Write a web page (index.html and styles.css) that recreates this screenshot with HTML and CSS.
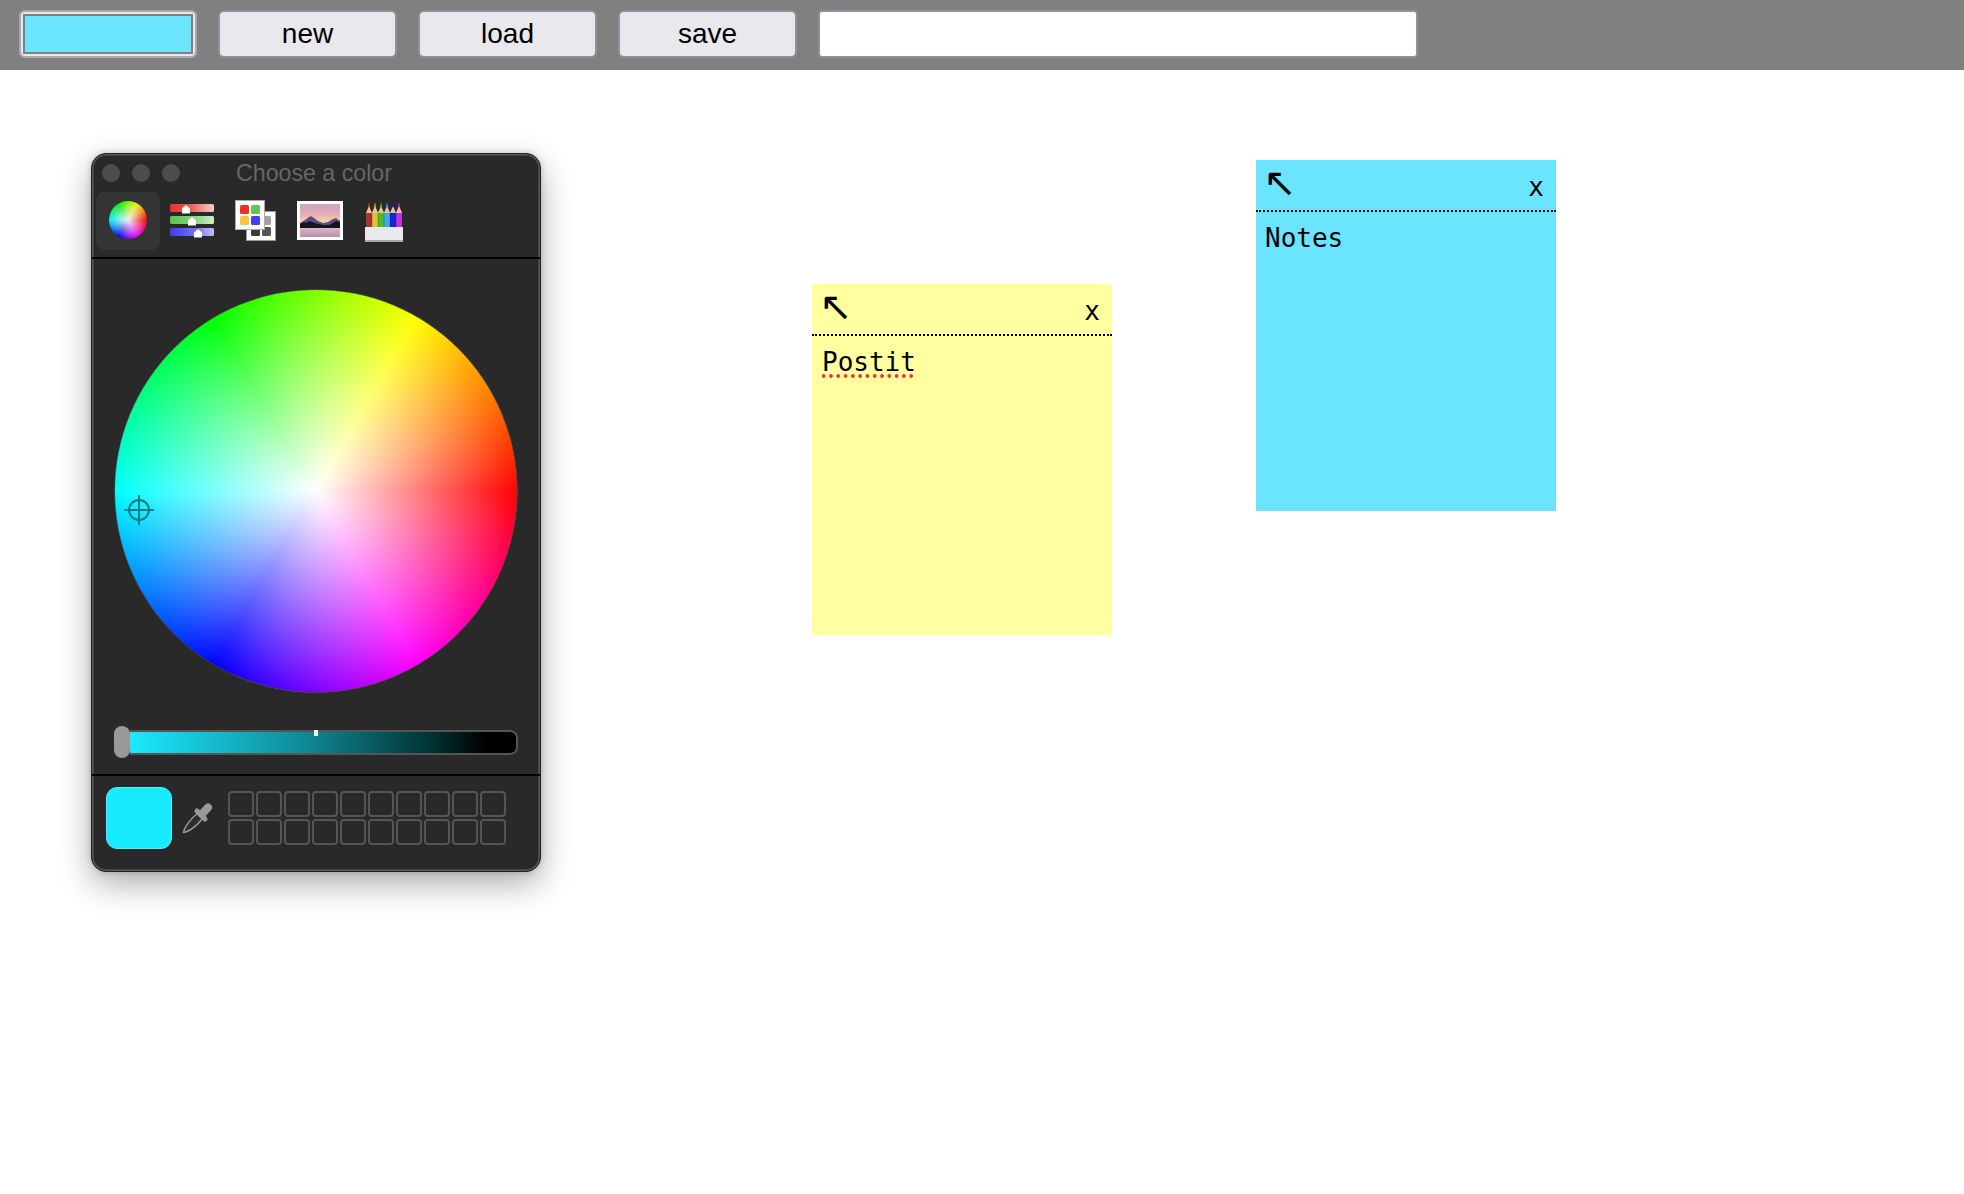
FILE: index.html
```html
<!DOCTYPE html>
<html lang="en">
<head>
<meta charset="utf-8">
<title>Notes</title>
<link rel="stylesheet" href="styles.css">
</head>
<body>
<header class="bar">
  <input class="color" type="color" value="#6ce5ff" aria-label="color">
  <button class="btn">new</button>
  <button class="btn">load</button>
  <button class="btn">save</button>
  <input class="name" type="text" aria-label="name">
</header>
<main class="desk">
  <section class="picker">
    <div class="titlebar">
      <div class="lights"><i></i><i></i><i></i></div>
      <div class="title">Choose a color</div>
    </div>
    <div class="tools">
      <div class="tab"><div class="wheel-small"></div></div>
      <svg class="ic-sliders" viewBox="0 0 44 42" width="44" height="42">
        <defs>
          <linearGradient id="gr"><stop offset="0" stop-color="#e8332a"/><stop offset=".4" stop-color="#e8524a"/><stop offset="1" stop-color="#f5cbc8"/></linearGradient>
          <linearGradient id="gg"><stop offset="0" stop-color="#5fc254"/><stop offset=".5" stop-color="#7fd074"/><stop offset="1" stop-color="#cdeec8"/></linearGradient>
          <linearGradient id="gb"><stop offset="0" stop-color="#3a3fee"/><stop offset=".6" stop-color="#7276f2"/><stop offset="1" stop-color="#bfc1f8"/></linearGradient>
        </defs>
        <rect x="0" y="4" width="44" height="8" rx="1.500" fill="url(#gr)"/>
        <rect x="0" y="16" width="44" height="8" rx="1.500" fill="url(#gg)"/>
        <rect x="0" y="28" width="44" height="8" rx="1.500" fill="url(#gb)"/>
        <path d="M16 5l4 3.500v5h-8v-5z" fill="#fff"/>
        <path d="M22 17l4 3.500v5h-8v-5z" fill="#fff"/>
        <path d="M28 29l4 3.500v5h-8v-5z" fill="#fff"/>
      </svg>
      <svg class="ic-palette" viewBox="0 0 41 42" width="41" height="42">
        <rect x="11.500" y="11.500" width="29" height="29" fill="#fff" stroke="#999"/>
        <rect x="27" y="16" width="9" height="9" rx="1.500" fill="#a0a0a0"/>
        <rect x="16" y="27" width="9" height="9" rx="1.500" fill="#3c3c3c"/>
        <rect x="27" y="27" width="9" height="9" rx="1.500" fill="#555"/>
        <rect x=".5" y=".5" width="29" height="29" fill="#fff" stroke="#aaa"/>
        <rect x="5" y="5" width="9" height="9" rx="1.500" fill="#ee3124"/>
        <rect x="16" y="5" width="9" height="9" rx="1.500" fill="#62c554"/>
        <rect x="5" y="16" width="9" height="9" rx="1.500" fill="#f9c33c"/>
        <rect x="16" y="16" width="9" height="9" rx="1.500" fill="#3f41f5"/>
      </svg>
      <svg class="ic-image" viewBox="0 0 46 40" width="46" height="40">
        <defs>
          <linearGradient id="sky" x1="0" y1="0" x2="0" y2="1"><stop offset="0" stop-color="#c9a2c8"/><stop offset=".45" stop-color="#e6adb0"/><stop offset=".8" stop-color="#fadb9f"/><stop offset="1" stop-color="#f9e0a8"/></linearGradient>
          <linearGradient id="lake" x1="0" y1="0" x2="0" y2="1"><stop offset="0" stop-color="#e0bccb"/><stop offset="1" stop-color="#bb8cab"/></linearGradient>
        </defs>
        <rect y="1" width="46" height="39" fill="#fff"/>
        <rect x="3" y="4" width="40" height="23" fill="url(#sky)"/>
        <rect x="3" y="27" width="40" height="10" fill="url(#lake)"/>
        <path d="M3 23l5-3 4-3 2-1 3 2 4 3 5 2 5-1 5-3 3-1 4 3v6H3z" fill="#5d4c86"/>
        <path d="M3 24l4-2 2 1 3-2 3 1 3 1 4 1 4 1 6 0 4-2 3-2 4 1v6H3z" fill="#16141c"/>
      </svg>
      <svg class="ic-pencils" viewBox="0 0 38 42" width="38" height="42">
        <path d="M1 27V13l3-7 3 7v14z" fill="#a63430"/><path d="M7 27V13l3-7 3 7v14z" fill="#dcc230"/><path d="M13 27V13l3-7 3 7v14z" fill="#4fb83c"/><path d="M19 27V13l3-7 3 7v14z" fill="#42a8e8"/><path d="M25 27V13l3-7 3 7v14z" fill="#1526d8"/><path d="M31 27V13l3-7 3 7v14z" fill="#c332d8"/>
        <path d="M1 13l3-7 3 7zM7 13l3-7 3 7zM13 13l3-7 3 7zM19 13l3-7 3 7zM25 13l3-7 3 7zM31 13l3-7 3 7z" fill="#e8c49a"/>
        <path d="M2.500 7l1.500-5 1.500 5z" fill="#c4302a"/><path d="M8.500 7l1.500-5 1.500 5z" fill="#a8902a"/><path d="M14.500 7l1.500-5 1.500 5z" fill="#3f9a30"/><path d="M20.500 7l1.500-5 1.500 5z" fill="#2a86c8"/><path d="M26.500 7l1.500-5 1.500 5z" fill="#1020c8"/><path d="M32.500 7l1.500-5 1.500 5z" fill="#a824b8"/>
        <path d="M6.500 13h1v14h-1zM12.500 13h1v14h-1zM18.500 13h1v14h-1zM24.500 13h1v14h-1zM30.500 13h1v14h-1z" fill="#000" opacity=".22"/>
        <rect x="0" y="27" width="38" height="13" fill="#e9e9e9"/>
        <rect x="0" y="40" width="38" height="2" fill="#a8a8a8"/>
      </svg>
    </div>
    <div class="main-pane">
      <div class="wheel-wrap">
        <div class="wheel-big"></div>
        <svg class="cross" viewBox="0 0 30 30" width="30" height="30"><circle cx="15" cy="15" r="10" fill="none" stroke="#087f86" stroke-width="2"/><path d="M0 15h30M15 0v30" stroke="#087f86" stroke-width="2"/></svg>
      </div>
      <div class="slider">
        <div class="thumb"></div>
        <div class="track"><span class="tick"></span></div>
      </div>
    </div>
    <div class="bottom">
      <div class="swatch"></div>
      <svg class="dropper" viewBox="0 0 32 32" width="32" height="32">
        <path d="M1.500 30.500C2.500 25 9 16 15.500 11.500l5 5C16 23 7 29.500 1.500 30.500z" fill="#2f2f2f" stroke="#999" stroke-width="1.500" stroke-linejoin="round"/>
        <path d="M15 9l8 8" stroke="#9a9a9a" stroke-width="5" stroke-linecap="round"/>
        <path d="M20 12l6-6.500" stroke="#9a9a9a" stroke-width="8" stroke-linecap="round"/>
      </svg>
      <div class="cells">
        <i></i><i></i><i></i><i></i><i></i><i></i><i></i><i></i><i></i><i></i>
        <i></i><i></i><i></i><i></i><i></i><i></i><i></i><i></i><i></i><i></i>
      </div>
    </div>
  </section>

  <article class="note note-yellow">
    <div class="note-head"><span class="arrow">↖</span><span class="close">x</span></div>
    <div class="note-body"><span class="misspelt">Postit</span></div>
  </article>
  <article class="note note-blue">
    <div class="note-head"><span class="arrow">↖</span><span class="close">x</span></div>
    <div class="note-body">Notes</div>
  </article>
</main>
</body>
</html>
```
FILE: styles.css
```css
* { box-sizing: border-box; }
html, body { margin: 0; height: 100%; overflow: hidden; background: #fff; }
body { font-family: "Liberation Sans", Arial, sans-serif; }

.bar {
  height: 70px;
  background: #808080;
  display: flex;
  align-items: center;
  gap: 21px;
  padding: 0 0 2px 19px;
}
.btn {
  width: 179px;
  height: 48px;
  margin: 0;
  padding: 0;
  background: #e9e9ed;
  border: 2px solid #8f8f9d;
  border-radius: 6px;
  color: #000;
  font: 28px "Liberation Sans", Arial, sans-serif;
}
.color {
  appearance: none;
  -webkit-appearance: none;
  width: 178px;
  height: 48px;
  margin: 0;
  padding: 0;
  background: #e9e9ed;
  border: 2px solid #a9a9b5;
  border-radius: 6px;
}
.color::-webkit-color-swatch-wrapper { padding: 2px; background: #e9e9ed; }
.color::-webkit-color-swatch { border: 2px solid #808080; border-radius: 0; }
.name {
  width: 600px;
  height: 48px;
  margin: 0;
  padding: 0;
  background: #fff;
  border: 2px solid #8f8f9d;
  border-radius: 4px;
}

.desk { position: relative; height: calc(100% - 70px); }

/* colour picker window */
.picker {
  position: absolute;
  left: 91px;
  top: 83px;
  width: 450px;
  height: 719px;
  display: flex;
  flex-direction: column;
  background: #292929;
  border-radius: 15px;
  border: 1px solid #1f1f1f;
  box-shadow: inset 0 0 0 1.500px #5a5a5a, 0 12px 32px rgba(0, 0, 0, .32), 0 0 6px rgba(0, 0, 0, .18);
}
.titlebar { height: 38px; display: flex; align-items: center; padding-left: 10px; flex: none; }
.lights { display: flex; gap: 12px; }
.lights i { width: 18px; height: 18px; border-radius: 50%; background: #4d4d4d; }
.title { margin-left: 56px; font: 23.200px "Liberation Sans", Arial, sans-serif; color: #666; white-space: nowrap; }

.tools {
  height: 67px;
  flex: none;
  display: flex;
  align-items: flex-start;
  padding-left: 4px;
  border-bottom: 2px solid #000;
}
.tools svg { display: block; margin-top: 8px; }
.tab { width: 64px; height: 58px; background: #343434; border-radius: 9px; display: flex; align-items: center; justify-content: center; }
.ic-sliders { margin-left: 10px; }
.ic-palette { margin-left: 21px; }
.ic-image { margin-left: 21px; }
.ic-pencils { margin-left: 22px; }

.wheel-small {
  width: 38px;
  height: 38px;
  border-radius: 50%;
  position: relative;
  top: -1px;
  opacity: .92;
  background:
    radial-gradient(closest-side, #fff 0, rgba(255, 255, 255, 0) 100%),
    conic-gradient(from 90deg, #f00, #f0f, #00f, #0ff, #0f0, #ff0, #f00);
}
.wheel-wrap { position: relative; width: 402px; height: 402px; flex: none; }
.wheel-big {
  width: 402px;
  height: 402px;
  border-radius: 50%;
  overflow: hidden;
  position: relative;
  box-shadow: 0 0 0 .5px rgba(255, 255, 255, .3);
}
.wheel-big::before {
  content: "";
  position: absolute;
  inset: -12px;
  filter: blur(3px);
  background:
    radial-gradient(circle 201px, #fff 0, rgba(255, 255, 255, 0) 100%),
    conic-gradient(from 90deg, #f00, #f0f, #00f, #0ff, #0f0, #ff0, #f00);
}
.cross { position: absolute; left: 9px; top: 205px; }

.main-pane {
  flex: 1;
  display: flex;
  flex-direction: column;
  align-items: center;
  padding-top: 31px;
}
.slider {
  position: relative;
  width: 404px;
  margin-top: 38px;
  padding-left: 16px;
  margin-left: -1px;
}
.track {
  height: 25px;
  position: relative;
  border: 2px solid #555;
  border-left: 0;
  border-radius: 0 8px 8px 0;
  background: linear-gradient(90deg, #1be9ff, #0f8a97 45%, #033 78%, #000 92%);
}
.thumb {
  position: absolute;
  left: 0;
  top: -4px;
  width: 16px;
  height: 32px;
  border-radius: 8px;
  background: #999;
}
.tick { position: absolute; left: 184px; top: -2px; width: 4px; height: 6px; background: #eee; }

.bottom {
  height: 97px;
  flex: none;
  display: flex;
  align-items: flex-start;
  border-top: 2px solid #000;
  padding: 11px 0 0 14px;
}
.swatch { width: 66px; height: 62px; border-radius: 11px; background: #19ebff; border: 1px solid #4fefff; flex: none; }
.dropper { margin: 15px 0 0 10px; flex: none; }
.cells {
  margin: 4px 0 0 14px;
  display: grid;
  grid-template-columns: repeat(10, 26px);
  grid-auto-rows: 26px;
  gap: 2px;
}
.cells i { border: 2px solid #555; border-radius: 4px; }

/* sticky notes */
.note {
  position: absolute;
  width: 300px;
  height: 351px;
  font-family: "DejaVu Sans Mono", monospace;
  color: #000;
}
.note-yellow { left: 812px; top: 214px; background: #ffff9f; }
.note-blue { left: 1256px; top: 90px; background: #6be4ff; }
.note-head {
  height: 52px;
  display: flex;
  justify-content: space-between;
  padding: 0 12px 0 7px;
  border-bottom: 2px dotted #000;
  font-size: 26px;
}
.arrow { font: 40px/44px "DejaVu Sans", sans-serif; }
.close { line-height: 54px; }
.note-body { padding: 9px 9px; font-size: 26px; line-height: 34px; }
.note-yellow .note-body { padding-left: 10px; }
.misspelt {
  display: inline-block;
  background: radial-gradient(circle, #f0383a 1.600px, transparent 2.100px) -2px calc(100% - 1px) / 7.300px 4px repeat-x;
}
```
